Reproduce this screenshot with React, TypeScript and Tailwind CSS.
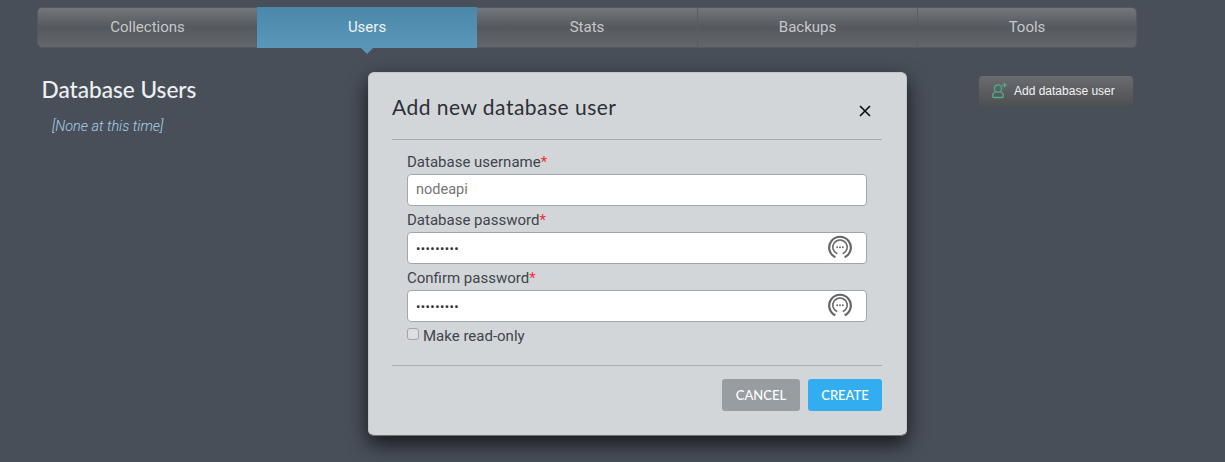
import React from "react";

const tabs = ["Collections", "Users", "Stats", "Backups", "Tools"];

function PassIcon() {
  return (
    <svg width="26" height="26" viewBox="0 0 26 26" fill="none" stroke="#666" className="absolute right-[13px] top-[1px]">
      <path d="M8.4 23.3A10.8 10.8 0 1 1 17.6 23.3" strokeWidth="2.2" />
      <path d="M10.2 19.8A7.2 7.2 0 1 1 15.8 19.8" strokeWidth="1.5" />
      <circle cx="10.2" cy="13.2" r="0.95" fill="#666" stroke="none" />
      <circle cx="13" cy="13.2" r="0.95" fill="#666" stroke="none" />
      <circle cx="15.8" cy="13.2" r="0.95" fill="#666" stroke="none" />
    </svg>
  );
}

function Field({ label, value, password }: { label: string; value: string; password?: boolean }) {
  return (
    <div>
      <div className="h-[26px] pt-[4px] text-[15px] leading-[20px] text-[#3f444b]">
        {label}
        <span className="text-[#ff2a2a]">*</span>
      </div>
      <div className="relative h-[32px] rounded-[4px] border border-[#a3a7ab] bg-white pl-[8px] text-[14.5px] leading-[30px]">
        {password ? (
          <span className="relative top-px text-[13px] tracking-[0.4px] text-[#333]">•••••••••</span>
        ) : (
          <span className="text-[#757575]">{value}</span>
        )}
        {password && <PassIcon />}
      </div>
    </div>
  );
}

export default function App() {
  return (
    <div className="relative h-[462px] w-[1225px] overflow-hidden bg-[#484f59] font-['Roboto',sans-serif]">
      <div className="ml-[37px] w-[1100px] pt-[7px]">
        <div className="flex h-[41px] rounded-[5px] border border-[#55595f] bg-gradient-to-b from-[#73767a] via-[#55585d] to-[#63666b]">
          {tabs.map((t, i) => (
            <div
              key={t}
              className={
                "relative flex items-center justify-center text-[15px] " +
                (i === 0 || i === 4 ? "w-[219px] " : "w-[220px] ") +
                (t === "Users"
                  ? "-my-px bg-gradient-to-b from-[#4a87a8] to-[#5a97b8] text-[#f0f3f5]"
                  : "text-[#c6c8ca] " + (i > 2 ? "border-l border-[#5a5d62]" : ""))
              }
            >
              {t}
              {t === "Users" && (
                <span className="absolute left-[104px] top-[41px] h-0 w-0 border-x-[6px] border-t-[6px] border-x-transparent border-t-[#5795b6]" />
              )}
            </div>
          ))}
        </div>
      </div>

      <div className="flex justify-between pl-[41.5px] pr-[92px] pt-[28px]">
        <div>
          <div className="h-[28px] font-['Lato',sans-serif] text-[22.6px] font-medium leading-[28px] text-[#eef0f2]">
            Database Users
          </div>
          <div className="mt-[14px] pl-[10.5px] text-[14.4px] font-light italic leading-[18px] text-[#a9cfe8]">[None at this time]</div>
        </div>
        <div className="flex h-[31px] w-[154px] items-center rounded-[4px] bg-gradient-to-b from-[#6a6c70] to-[#4d4e50] pb-[2px] pl-[12px] font-['Liberation_Sans',sans-serif] text-[12px] text-[#f2f2f2]">
          <svg width="17" height="17" viewBox="0 0 17 17" fill="none" stroke="#4caf86" strokeWidth="1.3" className="mr-[6px]">
            <circle cx="7" cy="6.5" r="3.6" />
            <path d="M5 9.6C3 10.4 1.5 12 1.5 14.2C1.5 15 2 15.5 3 15.5H11C12 15.5 12.5 15 12.5 14.2C12.5 12 11 10.4 9 9.6" />
            <path d="M13.5 1V5.5M11.2 3.2H15.8" />
          </svg>
          Add database user
        </div>
      </div>

      <div className="absolute left-[368px] top-[72px] h-[364px] w-[539px] rounded-[6px] border border-[#c4c7ca] border-b-[#6b6e72] bg-[#d3d6d9] pl-[23px] pr-[24px] shadow-[0_8px_20px_rgba(0,0,0,0.7)]">
        <div className="relative h-[67px] border-b border-[#a9acaf] pt-[20px] font-['Lato',sans-serif] text-[21px] leading-[28px] tracking-[0.48px] text-[#2c3036]">
          Add new database user
          <svg width="12" height="12" viewBox="0 0 12 12" stroke="#111" strokeWidth="1.7" className="absolute right-[11px] top-[32px]">
            <path d="M1 1L11 11M11 1L1 11" />
          </svg>
        </div>
        <div className="px-[15px] pt-[8px]">
          <Field label="Database username" value="nodeapi" />
          <Field label="Database password" value="" password />
          <Field label="Confirm password" value="" password />
          <div className="mt-[4px] flex h-[20px] items-center text-[15px] text-[#3f444b]">
            <span className="mb-[4px] mr-[4px] h-[12px] w-[12px] rounded-[3px] border border-[#a5a5a5] bg-[#dedede]" />
            Make read-only
          </div>
        </div>
        <div className="mt-[19px] flex h-[69px] justify-end gap-[8px] border-t border-[#a9acaf] pt-[13px] font-['Lato',sans-serif] text-[13px] font-medium text-white">
          <div className="flex h-[32px] w-[78px] items-center justify-center rounded-[3px] bg-[#989da2] pt-[2px]">CANCEL</div>
          <div className="flex h-[32px] w-[74px] items-center justify-center rounded-[3px] bg-[#32adf0] pt-[2px]">CREATE</div>
        </div>
      </div>
    </div>
  );
}
